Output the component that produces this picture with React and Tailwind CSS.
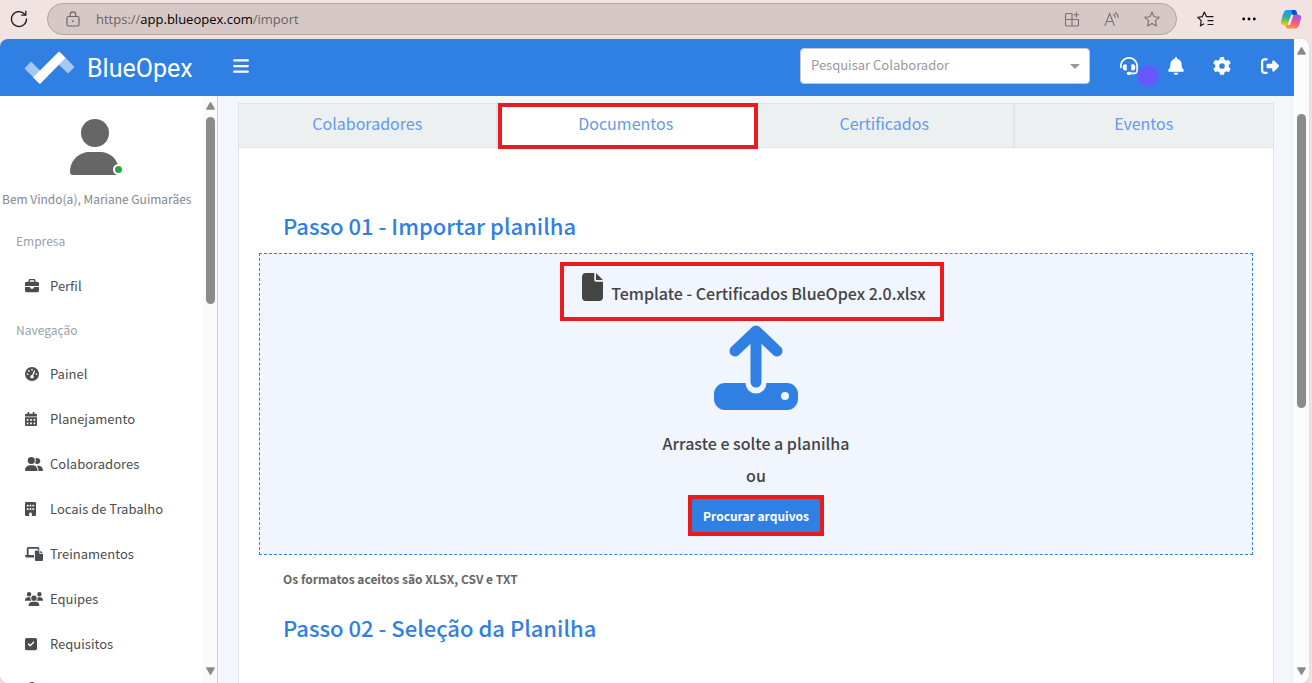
import React, { useState } from 'react';
import {
    FaBars,
    FaBell,
    FaBriefcase,
    FaBuilding,
    FaFile,
    FaGaugeHigh,
    FaGear,
    FaHeadset,
    FaLaptopFile,
    FaRightFromBracket,
    FaSquareCheck,
    FaUserGroup,
    FaUsers,
    FaUserTie
} from 'react-icons/fa6';
import { FaCalendarAlt } from 'react-icons/fa';

const companyLinks = [
    { label: 'Perfil', icon: FaBriefcase, size: 'w-3.5' }
];

const navLinks = [
    { label: 'Painel', icon: FaGaugeHigh, size: 'w-3.5' },
    { label: 'Planejamento', icon: FaCalendarAlt, size: 'w-3' },
    { label: 'Colaboradores', icon: FaUserGroup, size: 'w-[18px]' },
    { label: 'Locais de Trabalho', icon: FaBuilding, size: 'w-[11px]' },
    { label: 'Treinamentos', icon: FaLaptopFile, size: 'w-[18px]' },
    { label: 'Equipes', icon: FaUsers, size: 'w-[18px]' },
    { label: 'Requisitos', icon: FaSquareCheck, size: 'w-3' }
];

const tabs = ['Colaboradores', 'Documentos', 'Certificados', 'Eventos'];

const ScrollArrow = ({ down }) => (
    <svg viewBox="0 0 9 8" className={`w-[9px] h-2 shrink-0 ${down ? 'rotate-180' : ''}`}>
        <path d="M4.5 1 8 7H1Z" fill="#8b8b8b" stroke="#8b8b8b" strokeWidth="1.6" strokeLinejoin="round" />
    </svg>
);

const CopilotLogo = () => (
    <svg viewBox="0 0 24 22" className="w-[22px] h-5">
        <defs>
            <linearGradient id="cpLeft" x1="0.4" y1="0" x2="0.3" y2="1">
                <stop offset="0" stopColor="#1b9df0" />
                <stop offset="0.45" stopColor="#2aa7b8" />
                <stop offset="0.7" stopColor="#7cc342" />
                <stop offset="1" stopColor="#f5c518" />
            </linearGradient>
            <linearGradient id="cpRight" x1="0.7" y1="0" x2="0.3" y2="1">
                <stop offset="0" stopColor="#a45be8" />
                <stop offset="0.5" stopColor="#f0568f" />
                <stop offset="1" stopColor="#fb9a3c" />
            </linearGradient>
        </defs>
        <path d="M7.5 1h8.2c1.4 0 2 .8 2.4 2l1 3.4h-2.6c-1.6 0-2.5.8-3 2.4l-2 6c-.7 2-1.7 2.9-3.6 2.9H4C1.5 17.7.3 15.7 1 13.2l2.8-9C4.5 2.1 5.6 1 7.5 1Z" fill="url(#cpLeft)" />
        <path d="M12.5 1h3.2c1.4 0 2 .8 2.4 2l1 3.4h-2.6c-1.6 0-2.5.8-3 2.4Z" fill="#1648c4" />
        <path d="M16.5 21.5H8.8c-1.4 0-2.1-.8-2.5-2l-.6-1.8h2.2c1.9 0 2.9-.9 3.6-2.9l2-6c.5-1.6 1.4-2.4 3-2.4H20c2.5 0 3.7 2 3 4.5l-2.6 7.4c-.7 2.1-2 3.2-3.9 3.2Z" fill="url(#cpRight)" />
        <path d="M13.2 7.2 9.8 16.6" stroke="#f8ece9" strokeWidth="2.4" strokeLinecap="round" />
    </svg>
);

const BrowserBar = () => (
    <div className="flex h-[39px] shrink-0 items-center bg-[#f1e3e1] pb-px pr-2.5">
        <button aria-label="Recarregar" className="ml-2.5 mr-[19px]">
            <svg viewBox="0 0 18 18" className="h-[18px] w-[18px]" fill="none" stroke="#1b1b1b" strokeWidth="1.3" strokeLinecap="round" strokeLinejoin="round">
                <path d="M16.5 9A7.5 7.5 0 1 1 14.8 4.3" />
                <path d="M15.8 1.2v4h-4" />
            </svg>
        </button>
        <div className="flex h-8 flex-1 items-center rounded-full border border-[#b3a3a2] bg-[#d6c8c7] pl-[18px] pr-4">
            <svg viewBox="0 0 14 16" className="h-4 w-3.5" fill="none" stroke="#6f6766" strokeWidth="1.2">
                <rect x="1" y="5.5" width="12" height="9.5" rx="1.5" />
                <path d="M4.2 5.5V3.6a2.8 2.8 0 0 1 5.6 0v1.9" />
                <circle cx="7" cy="10.2" r="0.9" fill="#6f6766" stroke="none" />
            </svg>
            <p className="ml-4 flex-1 font-['Open_Sans',sans-serif] text-[13px] leading-5 text-[#6b6362]">
                https://<span className="text-black">app.blueopex.com</span>/import
            </p>
            <div className="flex items-center gap-6 text-[#7b7271]">
                <svg viewBox="0 0 16 16" className="h-4 w-4" fill="none" stroke="currentColor" strokeWidth="1.1">
                    <path d="M8 15V2.5H2.5A1 1 0 0 0 1.5 3.5v10.2A1.2 1.2 0 0 0 2.7 15h10.6a1.2 1.2 0 0 0 1.2-1.2V8.5h-13M12.3 1v5.5M9.5 3.7H15" />
                </svg>
                <svg viewBox="0 0 16 16" className="h-4 w-4" fill="none" stroke="currentColor" strokeWidth="1.1" strokeLinecap="round">
                    <path d="M1 14.5 5.6 2.5 10.3 14.5M2.5 10.5h6.3M9.5 3.3a4 4 0 0 1 1.7 3.2M11.2 1.5a6 6 0 0 1 3 5" />
                </svg>
                <svg viewBox="0 0 16 16" className="h-4 w-4" fill="none" stroke="currentColor" strokeWidth="1.1" strokeLinejoin="round">
                    <path d="M8 1l2.1 4.7 5.1.6-3.8 3.4 1 5.2L8 12.4l-4.4 2.5 1-5.2L.8 6.3l5.1-.6Z" />
                </svg>
            </div>
        </div>
        <div className="flex items-center pl-5">
            <svg viewBox="0 0 17 16" className="h-4 w-[17px]" fill="none" stroke="#1b1b1b" strokeWidth="1.2" strokeLinejoin="round" strokeLinecap="round">
                <path d="M9.5 5.7 7.3 1 5.3 5.7.8 6.3l3.4 3.4-.8 5.2 3.3-1.9M9.5 5.7h6.5M11 9.7h5M11 13.5h5" />
            </svg>
            <svg viewBox="0 0 14 4" className="ml-7 h-1 w-3.5">
                <circle cx="1.7" cy="2" r="1.4" />
                <circle cx="7" cy="2" r="1.4" />
                <circle cx="12.3" cy="2" r="1.4" />
            </svg>
            <div className="ml-6">
                <CopilotLogo />
            </div>
        </div>
    </div>
);

const Header = () => (
    <header className="flex h-[57px] shrink-0 items-center bg-[#3080e3] pb-[3px] pl-6 pr-[15px] text-white">
        <a href="#" className="flex items-center gap-3 pt-[3px]">
            <svg viewBox="0 0 51 34" className="h-[34px] w-[51px]">
                <path d="M7 10.5 22 25.5 15.5 32.5.5 17.5Z" fill="#a5c8f3" />
                <path d="M36 1 50.5 16 44 22.5 29 8Z" fill="#a5c8f3" />
                <path d="M35 .5 41.5 7 16 33 9 26.5Z" fill="#fff" />
            </svg>
            <span className="pt-0.5 font-['Roboto',sans-serif] text-[25px] leading-8">BlueOpex</span>
        </a>
        <button aria-label="Menu" className="ml-10">
            <FaBars className="h-[18px] w-4" />
        </button>
        <div className="relative ml-auto w-[290px]">
            <select aria-label="Pesquisar Colaborador" className="h-9 w-full appearance-none rounded border border-[#c9c9c9] bg-white px-2.5 pb-0.5 text-[13px] text-[#999999]">
                <option>Pesquisar Colaborador</option>
            </select>
            <span className="pointer-events-none absolute right-2.5 top-4 border-x-[5px] border-t-[5px] border-x-transparent border-t-[#999999]" />
        </div>
        <div className="ml-[30px] flex items-center">
            <button aria-label="Suporte" className="relative">
                <FaHeadset className="h-[18px] w-[18px]" />
                <span className="absolute left-4 top-[7px] h-6 w-6 rounded-full bg-[radial-gradient(circle,#6459ff_55%,transparent_72%)]" />
            </button>
            <button aria-label="Notificações" className="ml-[30px]">
                <FaBell className="h-[18px] w-4" />
            </button>
            <button aria-label="Configurações" className="ml-[29px]">
                <FaGear className="h-[18px] w-[18px]" />
            </button>
            <button aria-label="Sair" className="ml-[30px]">
                <FaRightFromBracket className="h-[18px] w-[18px]" />
            </button>
        </div>
    </header>
);

const NavItem = ({ item }) => {
    const Icon = item.icon;
    return (
        <li>
            <a href="#" className="flex h-[45px] items-center pl-[25px] text-[13px] text-[#4a4d50]">
                <span className="w-[25px]">
                    <Icon preserveAspectRatio="none" className={`h-3.5 ${item.size}`} />
                </span>
                {item.label}
            </a>
        </li>
    );
};

const Sidebar = () => (
    <aside className="flex w-[218px] shrink-0 border-r border-[#cfcfcf] bg-white">
        <nav className="flex-1 overflow-hidden whitespace-nowrap">
            <div className="flex justify-center pr-[13px] pt-[23px]">
                <div className="relative">
                    <svg viewBox="0 0 50 56" className="h-14 w-[50px]" fill="#666">
                        <circle cx="25" cy="14" r="14" />
                        <path d="M20 33h10c11 0 19 8 19 20 0 2-1 3-3 3H3c-2 0-3-1-3-3 0-12 9-20 20-20Z" />
                    </svg>
                    <span className="absolute -right-1 bottom-0 h-[11px] w-[11px] rounded-full border-2 border-white bg-[#28a745]" />
                </div>
            </div>
            <p className="mt-3 pl-0.5 text-[12px] leading-6 text-[#83878f]">Bem Vindo(a), Mariane Guimarães</p>
            <h6 className="mt-2 flex h-11 items-center pl-4 text-[12px] text-[#98a2aa]">Empresa</h6>
            <ul>
                {companyLinks.map((item) => <NavItem key={item.label} item={item} />)}
            </ul>
            <h6 className="flex h-[43px] items-center pl-4 text-[12px] text-[#98a2aa]">Navegação</h6>
            <ul>
                {navLinks.map((item) => <NavItem key={item.label} item={item} />)}
            </ul>
            <FaUserTie className="ml-[25px] mt-4 h-3.5 w-3.5 text-[#4a4d50]" />
        </nav>
        <div className="flex w-3.5 flex-col items-center justify-between bg-[#fafafa] pb-2 pt-1.5">
            <div className="flex flex-col items-center gap-[7px]">
                <ScrollArrow />
                <div className="h-[187px] w-[9px] rounded-full bg-[#8b8b8b]" />
            </div>
            <ScrollArrow down />
        </div>
    </aside>
);

const UploadIcon = () => (
    <svg viewBox="0 0 84 86" className="h-[86px] w-[84px]">
        <rect x="0" y="58" width="84" height="27" rx="11" fill="#3080e3" />
        <path d="M42 20v38" stroke="#f0f5fe" strokeWidth="21" strokeLinecap="round" />
        <path d="M42 7v50M21 26 42 6 63 26" fill="none" stroke="#3080e3" strokeWidth="11" strokeLinecap="round" strokeLinejoin="round" />
        <circle cx="71" cy="71" r="4" fill="#f0f5fe" />
    </svg>
);

const App = () => {
    const [active, setActive] = useState('Documentos');

    return (
        <div className="flex h-screen flex-col overflow-hidden bg-[#f1e3e1] font-['Noto_Sans_CJK_SC',sans-serif]">
            <BrowserBar />
            <div className="mr-[3px] flex min-h-0 flex-1 overflow-hidden rounded-lg shadow">
                <div className="flex min-w-0 flex-1 flex-col">
                    <Header />
                    <div className="flex min-h-0 flex-1">
                        <Sidebar />
                        <main className="flex min-w-0 flex-1 flex-col overflow-hidden bg-[#f4f6fb] px-5 pt-[7px]">
                            <section className="flex-1 border border-b-0 border-[#dce5e8] bg-white">
                                {/* Tabs */}
                                <div className="grid grid-cols-4">
                                    {tabs.map((tab) => (
                                        <button
                                            key={tab}
                                            onClick={() => setActive(tab)}
                                            className={`relative h-11 border-b border-r-2 border-[#dce5e8] pb-1.5 text-base text-[#6599eb] last:border-r-0 ${tab === active ? 'bg-white' : 'bg-[#ecf0f1]'}`}
                                        >
                                            {tab}
                                            {tab === active && (
                                                <span className="absolute -bottom-0.5 -right-1 -top-px left-0 z-10 border-4 border-[#e81c1f]" />
                                            )}
                                        </button>
                                    ))}
                                </div>

                                {/* Upload */}
                                <div className="px-5 pt-[61px]">
                                    <h2 className="px-6 text-[22px] font-medium leading-8 text-[#3080e3]">Passo 01 - Importar planilha</h2>
                                    <div className="mt-3 flex flex-col items-center border border-dashed border-[#3080e3] bg-[#f0f5fe] pb-[18px] pt-2 text-[#444444]">
                                        <div className="mr-2 flex h-[59px] items-start gap-2 border-4 border-[#e81c1f] pl-[18px] pr-3.5 pt-[7px]">
                                            <FaFile className="h-7 w-[21px]" />
                                            <span className="mt-2 text-base font-medium leading-6">Template - Certificados BlueOpex 2.0.xlsx</span>
                                        </div>
                                        <div className="mt-1">
                                            <UploadIcon />
                                        </div>
                                        <p className="mt-4 text-base font-medium leading-8">Arraste e solte a planilha</p>
                                        <p className="text-base font-medium leading-8">ou</p>
                                        <button className="mt-1 h-[41px] border-4 border-[#e81c1f] bg-[#3080e3] px-[11px] text-[12px] font-bold text-white">
                                            Procurar arquivos
                                        </button>
                                    </div>
                                    <p className="mt-3 px-6 text-[12px] font-bold leading-6 text-[#666666]">Os formatos aceitos são XLSX, CSV e TXT</p>
                                    <h2 className="mt-5 px-6 text-[22px] font-medium leading-8 text-[#3080e3]">Passo 02 - Seleção da Planilha</h2>
                                </div>
                            </section>
                        </main>
                    </div>
                </div>
                <div className="flex w-[15px] shrink-0 flex-col items-center justify-between bg-[#fcfcfc] py-2">
                    <div className="flex flex-col items-center">
                        <ScrollArrow />
                        <div className="mt-[59px] h-[294px] w-[9px] rounded-full bg-[#8b8b8b]" />
                    </div>
                    <ScrollArrow down />
                </div>
            </div>
        </div>
    );
};

export default App;
